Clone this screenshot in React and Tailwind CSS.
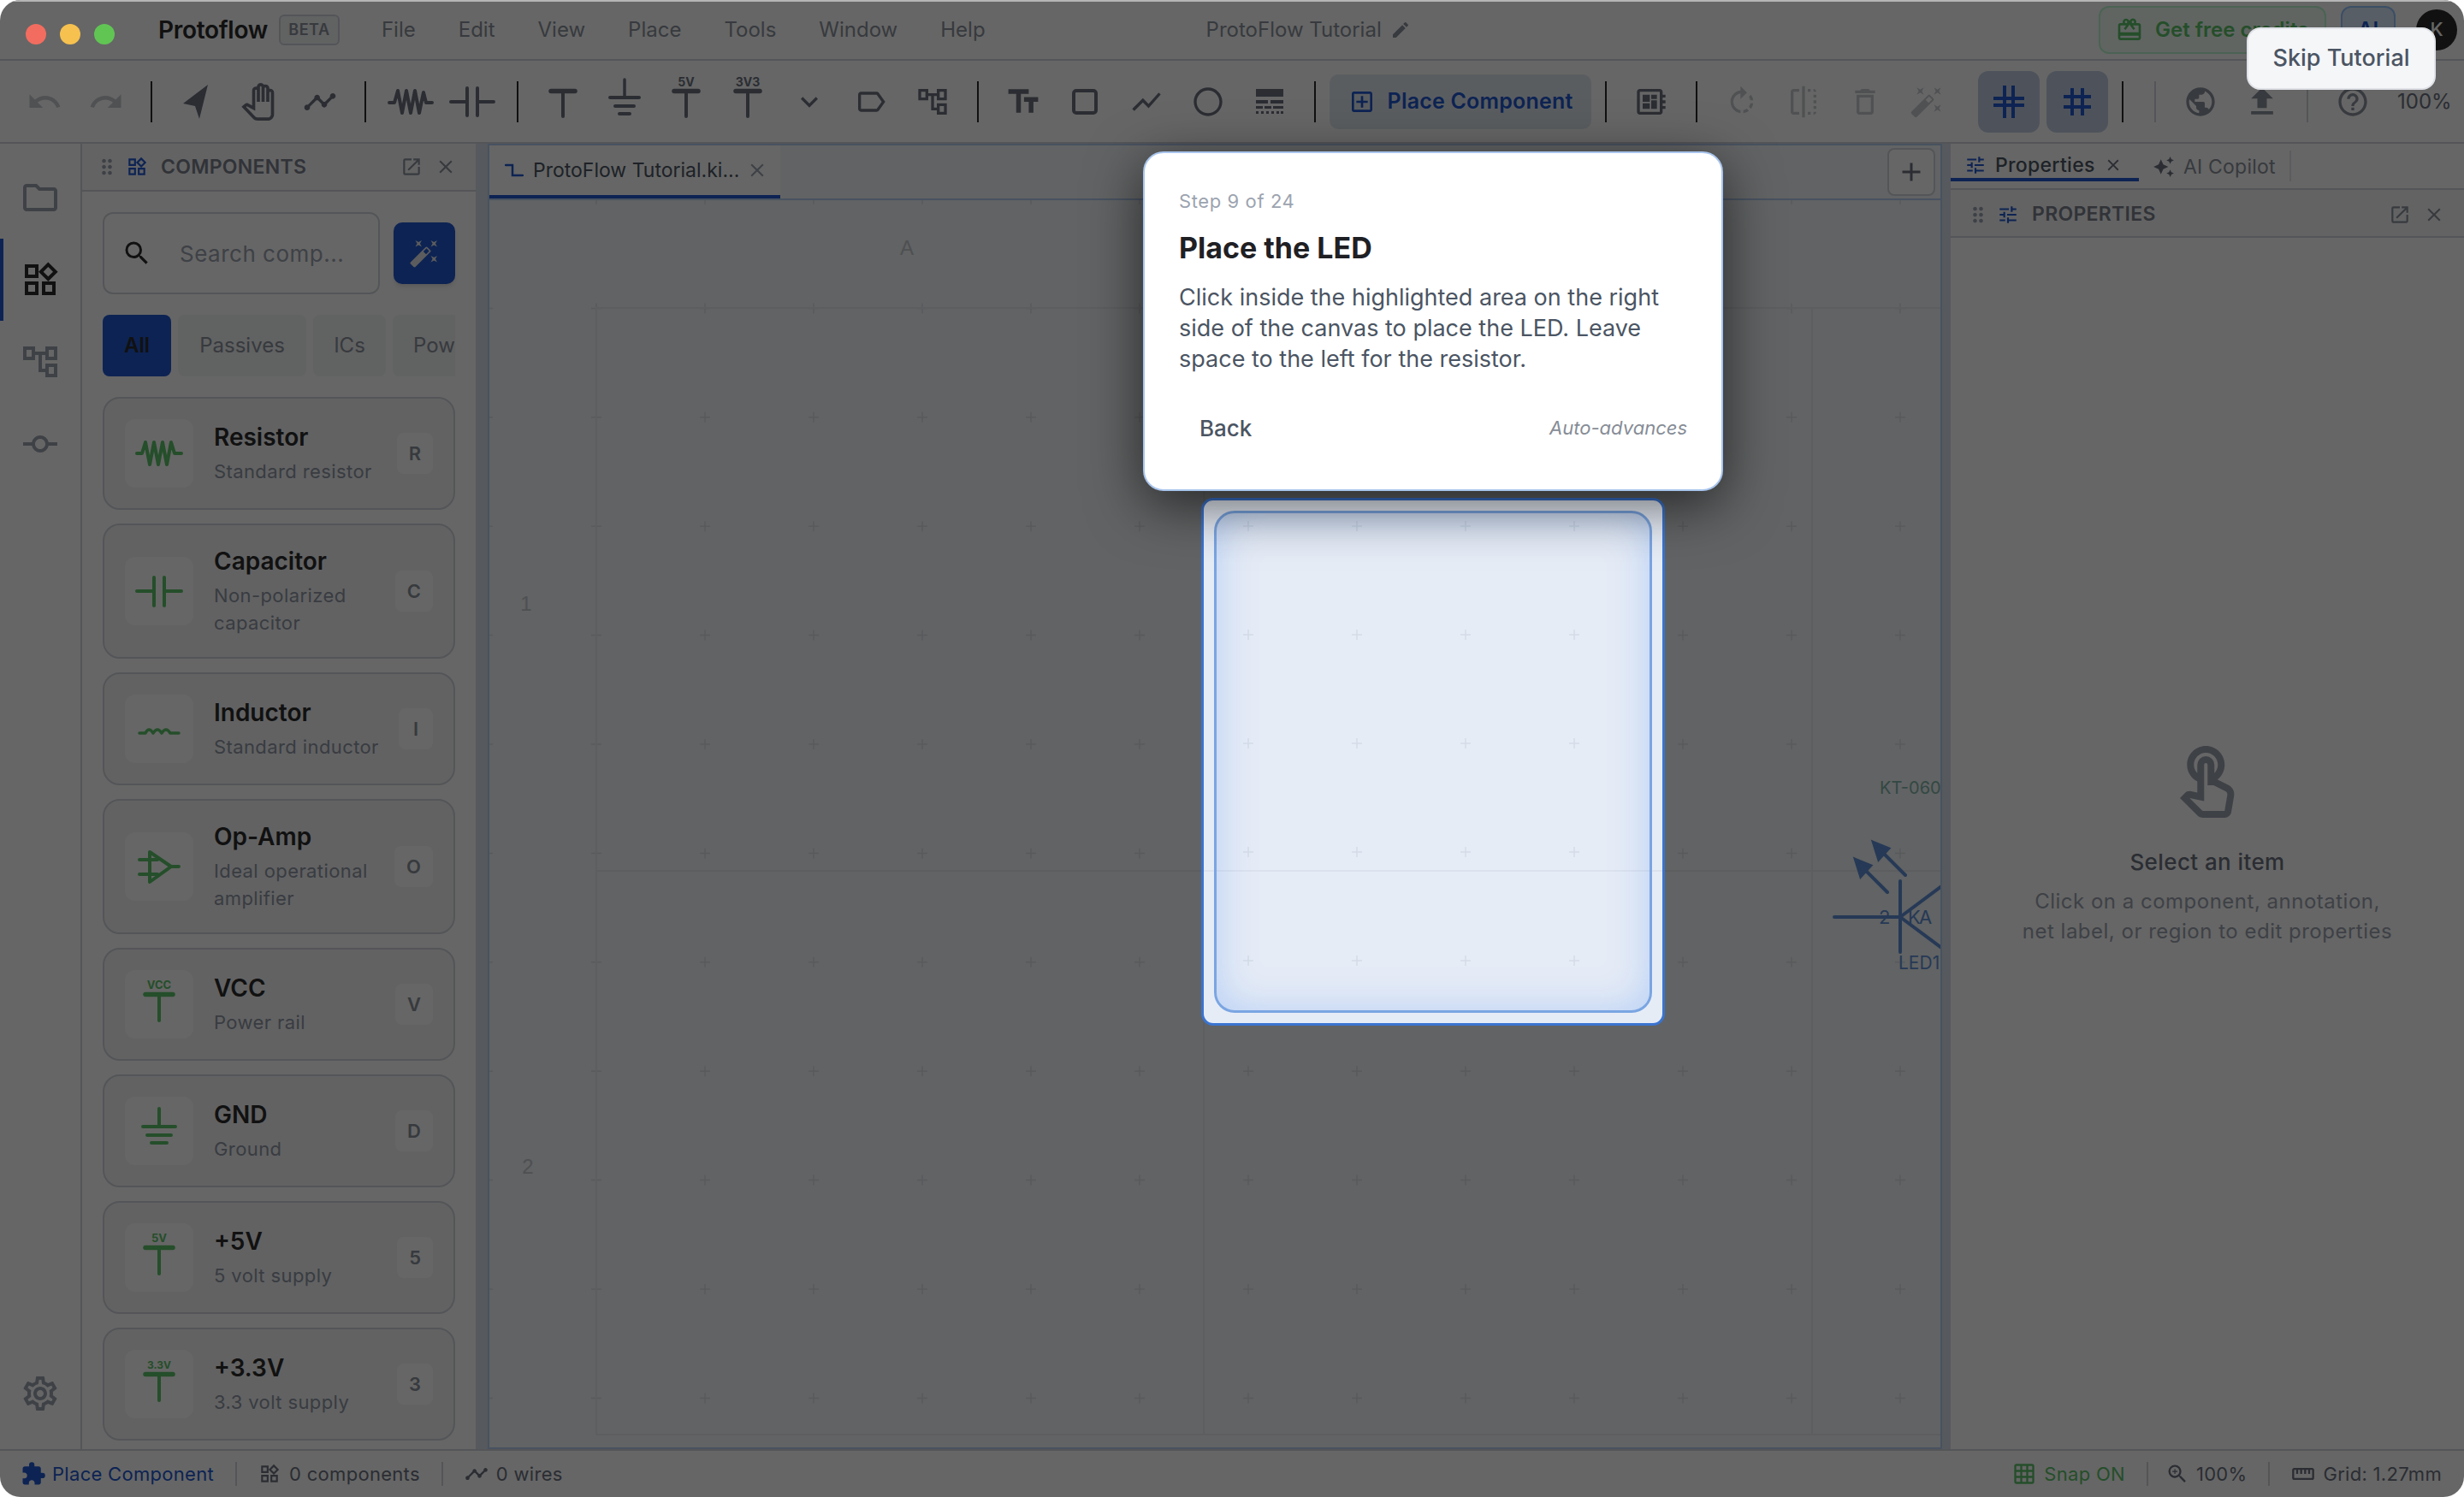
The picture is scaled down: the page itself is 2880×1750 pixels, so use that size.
import {
  MdUndo, MdRedo, MdOutlinePanTool, MdTimeline, MdExpandMore, MdOutlineLabel, MdOutlineAccountTree,
  MdTextFields, MdShowChart, MdOutlineCircle, MdOutlineAddBox, MdOutlineDeveloperBoard,
  MdRotateRight, MdFlip, MdOutlineDelete, MdAutoFixHigh, MdPublic, MdFileUpload, MdHelpOutline, MdEdit,
  MdOutlineRedeem, MdDragIndicator, MdOutlineWidgets, MdOpenInNew, MdClose, MdOutlineFolder, MdOutlineCommit,
  MdOutlineSettings, MdSearch, MdTune, MdAutoAwesome, MdAdd, MdOutlineTouchApp, MdExtension, MdGridOn,
  MdZoomIn, MdStraighten,
} from "react-icons/md"

const menus = ["File", "Edit", "View", "Place", "Tools", "Window", "Help"]

const GREEN = "#5cc46a"

function Power({ label, size = 48 }) {
  return (
    <svg className="overflow-visible" width={size} height={size} viewBox="0 0 48 48" fill="none" stroke="currentColor" strokeLinecap="round">
      {label && (
        <text x="24" y="6" textAnchor="middle" fontSize="14" fontWeight="700" fill="currentColor" stroke="none">
          {label}
        </text>
      )}
      <path d="M10 11.5H38" strokeWidth="5.5" />
      <path d="M24 12V41" strokeWidth="4" />
    </svg>
  )
}

function Gnd() {
  return (
    <svg className="overflow-visible" width="48" height="48" viewBox="0 0 48 48" fill="none" stroke="currentColor" strokeLinecap="round">
      <path d="M24 -2V18" strokeWidth="3.5" />
      <path d="M7 19H41" strokeWidth="4" />
      <path d="M13 29H35" strokeWidth="4" />
      <path d="M18 38H30" strokeWidth="4" />
    </svg>
  )
}

function Resistor() {
  return (
    <svg width="56" height="48" viewBox="0 0 56 48" fill="none" stroke="currentColor" strokeWidth="4" strokeLinecap="round" strokeLinejoin="round">
      <path d="M3 25H9L13 11L18 37L23 11L28 37L33 11L38 37L43 13L46 25H53" />
    </svg>
  )
}

function Cap() {
  return (
    <svg width="56" height="48" viewBox="0 0 56 48" fill="none" stroke="currentColor" strokeWidth="4" strokeLinecap="round">
      <path d="M3 24H22M22 8V40M34 8V40M34 24H53" />
    </svg>
  )
}

function Arrow() {
  return (
    <svg width="48" height="48" viewBox="0 0 48 48" fill="currentColor">
      <path d="M37 4L8 26L22 29L27 44Z" />
    </svg>
  )
}

function RectIcon() {
  return (
    <svg width="40" height="40" viewBox="0 0 40 40" fill="none" stroke="currentColor" strokeWidth="4">
      <rect x="7" y="7" width="26" height="26" rx="3" />
    </svg>
  )
}

function TableIcon() {
  return (
    <svg width="40" height="40" viewBox="0 0 40 40" fill="currentColor">
      <rect x="4" y="5" width="32" height="9" />
      <path d="M4 18h14v4H4zM21 18h15v4H21zM4 25h8v3H4zM14 25h8v3h-8zM24 25h12v3H24z" />
      <path d="M4 31h3v3H4zM10 31h3v3h-3zM16 31h3v3h-3zM22 31h3v3h-3zM28 31h3v3h-3zM33 31h3v3h-3z" />
    </svg>
  )
}

function Hash({ double }) {
  return (
    <svg width="44" height="44" viewBox="0 0 44 44" fill="none" stroke="#2158d0" strokeWidth="4">
      {double ? (
        <path d="M17 3V41M27 3V41M4 18H40M4 26H40" />
      ) : (
        <path d="M16 6V38M28 6V38M6 16H38M6 28H38" />
      )}
    </svg>
  )
}

function Sep() {
  return <div className="mx-[16px] h-[48px] w-[2px] shrink-0 bg-[#2b2b2b]" />
}

function Tool({ children, off, soft }) {
  const tone = off ? "text-[#c6cad0]" : soft ? "text-[#8b919c]" : "text-[#6b7280]"
  return <button className={`flex h-[72px] w-[72px] shrink-0 items-center justify-center ${tone}`}>{children}</button>
}

function TitleBar() {
  return (
    <div className="flex h-[71px] shrink-0 items-center border-b-[2px] border-[#d1d5db] bg-white pl-[30px]">
      <div className="relative z-10 flex w-[108px] gap-[16px] pt-[10px]">
        <span className="h-[24px] w-[24px] rounded-full bg-[#f26d5f]" />
        <span className="h-[24px] w-[24px] rounded-full bg-[#f6c14f]" />
        <span className="h-[24px] w-[24px] rounded-full bg-[#61c554]" />
      </div>
      <span className="ml-[47px] text-[28px] font-semibold tracking-[-0.3px] text-[#2b2b2b]">Protoflow</span>
      <span className="ml-[13px] flex h-[36px] w-[71px] items-center justify-center rounded-[6px] border-[2px] border-[#d1d5db] bg-[#f3f4f6] text-[18px] font-semibold tracking-[0.5px] text-[#8b919c]">
        BETA
      </span>
      <div className="ml-[49px] flex gap-[50px] text-[24px] text-[#8b919c]">
        {menus.map((m) => (
          <span key={m}>{m}</span>
        ))}
      </div>
      <div className="ml-[258px] flex items-center gap-[10px] text-[24px] text-[#8b919c]">
        <span>ProtoFlow Tutorial</span>
        <MdEdit size={24} />
      </div>
      <div className="ml-auto flex items-center pr-[8px]">
        <button className="flex h-[56px] w-[266px] items-center gap-[14px] rounded-[12px] border-[2px] border-[#bbf7d0] bg-[#f0fdf4] pl-[18px] text-[24px] font-semibold text-[#5cc46a]">
          <MdOutlineRedeem size={32} />
          Get free credits
        </button>
        <button className="ml-[17px] h-[56px] w-[64px] rounded-[12px] border-[2px] border-[#93c5fd] bg-[#dbeafe] text-[24px] font-semibold text-[#2158d0]">
          AI
        </button>
        <span className="ml-[24px] flex h-[48px] w-[48px] items-center justify-center rounded-full bg-[#2b2b2b] text-[22px] font-medium text-white">
          K
        </span>
      </div>
    </div>
  )
}

function Toolbar() {
  return (
    <div className="flex h-[97px] shrink-0 items-center border-b-[2px] border-[#d1d5db] bg-white pl-[16px]">
      <Tool off><MdUndo size={42} /></Tool>
      <Tool off><MdRedo size={42} /></Tool>
      <Sep />
      <Tool><Arrow /></Tool>
      <Tool><MdOutlinePanTool size={44} /></Tool>
      <Tool><MdTimeline size={40} /></Tool>
      <Sep />
      <Tool><Resistor /></Tool>
      <Tool><Cap /></Tool>
      <Sep />
      <Tool><Power /></Tool>
      <Tool><Gnd /></Tool>
      <Tool><Power label="5V" /></Tool>
      <Tool><Power label="3V3" /></Tool>
      <Tool><MdExpandMore size={40} /></Tool>
      <Tool><MdOutlineLabel size={40} /></Tool>
      <Tool><MdOutlineAccountTree size={40} /></Tool>
      <Sep />
      <Tool><MdTextFields size={44} /></Tool>
      <Tool><RectIcon /></Tool>
      <Tool><MdShowChart size={40} /></Tool>
      <Tool><MdOutlineCircle size={40} /></Tool>
      <Tool><TableIcon /></Tool>
      <Sep />
      <button className="flex h-[64px] w-[306px] shrink-0 items-center justify-center gap-[14px] rounded-[10px] bg-[#e2e8f0] text-[25px] font-semibold tracking-[0.2px] text-[#2158d0]">
        <MdOutlineAddBox size={32} />
        Place Component
      </button>
      <Sep />
      <Tool><MdOutlineDeveloperBoard size={40} /></Tool>
      <Sep />
      <Tool off><MdRotateRight size={40} /></Tool>
      <Tool off><MdFlip size={40} /></Tool>
      <Tool off><MdOutlineDelete size={40} /></Tool>
      <Tool off><MdAutoFixHigh size={40} /></Tool>
      <div className="ml-[24px] flex gap-[8px]">
        <button className="flex h-[72px] w-[72px] items-center justify-center rounded-[12px] bg-[#c2d0e4]"><Hash double /></button>
        <button className="flex h-[72px] w-[72px] items-center justify-center rounded-[12px] bg-[#c2d0e4]"><Hash /></button>
      </div>
      <Sep />
      <div className="flex items-center">
        <div className="ml-[20px] mr-[16px] h-[48px] w-[2px] bg-[#d1d5db]" />
        <Tool soft><MdPublic size={40} /></Tool>
        <Tool soft><MdFileUpload size={44} /></Tool>
        <div className="mx-[16px] h-[48px] w-[2px] bg-[#d1d5db]" />
        <Tool soft><MdHelpOutline size={40} /></Tool>
        <span className="ml-[16px] text-[24px] text-[#6b7280]">100%</span>
      </div>
    </div>
  )
}

function ActivityBar() {
  const Item = ({ children, active, cls }) => (
    <div className={`relative flex h-[96px] w-full items-center justify-center ${cls}`}>
      {active && <span className="absolute left-0 top-0 h-full w-[4px] bg-[#2158d0]" />}
      {children}
    </div>
  )
  return (
    <div className="flex w-[96px] shrink-0 flex-col items-center border-r-[2px] border-[#d1d5db] bg-white pt-[15px] text-[#9ca3af]">
      <Item><MdOutlineFolder size={48} /></Item>
      <Item active cls="text-[#2b2b2b]"><MdOutlineWidgets size={48} /></Item>
      <Item><MdOutlineAccountTree size={48} /></Item>
      <Item><MdOutlineCommit size={48} /></Item>
      <div className="mb-[41px] mt-auto"><MdOutlineSettings size={48} /></div>
    </div>
  )
}

function Box({ children }) {
  return (
    <svg width="80" height="80" viewBox="0 0 80 80" fill="none" stroke={GREEN} strokeWidth="4" strokeLinecap="round" strokeLinejoin="round">
      {children}
    </svg>
  )
}

function PowerBox({ label, small }) {
  return (
    <Box>
      <text x="40" y="22" textAnchor="middle" fontSize={small ? 12 : 13} fontWeight="700" fill={GREEN} stroke="none">{label}</text>
      <path d="M24 28.5H56" strokeWidth="5.5" />
      <path d="M40 29V59" />
    </Box>
  )
}

const parts = [
  {
    name: "Resistor", sub: ["Standard resistor"], key: "R",
    icon: <Box><path d="M14 40H20L24 27L29 53L34 27L39 53L44 27L49 53L54 27L58 40H66" /></Box>,
  },
  {
    name: "Capacitor", sub: ["Non-polarized", "capacitor"], key: "C",
    icon: <Box><path d="M14 40H34M34 24V57M46 24V57M46 40H66" /></Box>,
  },
  {
    name: "Inductor", sub: ["Standard inductor"], key: "I",
    icon: <Box><path d="M17 45H24Q28 37 33 45Q38 37 43 45Q48 37 53 45H63" strokeWidth="3.5" /></Box>,
  },
  {
    name: "Op-Amp", sub: ["Ideal operational", "amplifier"], key: "O",
    icon: <Box><path d="M29 23L54 40L29 58ZM54 40H63M17 32H38M17 49H38" /></Box>,
  },
  { name: "VCC", sub: ["Power rail"], key: "V", icon: <PowerBox label="VCC" /> },
  {
    name: "GND", sub: ["Ground"], key: "D",
    icon: <Box><path d="M40 14V35M21 35H59M26 45H54M31 54H49" /></Box>,
  },
  { name: "+5V", sub: ["5 volt supply"], key: "5", icon: <PowerBox label="5V" /> },
  { name: "+3.3V", sub: ["3.3 volt supply"], key: "3", icon: <PowerBox label="3.3V" small /> },
]

function PartCard({ part }) {
  return (
    <div className="flex shrink-0 items-center rounded-[20px] border-[2px] border-[#d1d5db] bg-[#f4f5f7] p-[24px]">
      <div className="flex h-[80px] w-[80px] shrink-0 items-center justify-center rounded-[12px] bg-white">{part.icon}</div>
      <div className="ml-[24px] flex-1">
        <div className="text-[28px] font-semibold leading-[36px] text-[#2b2b2b]">{part.name}</div>
        <div className="mt-[6px] text-[22px] leading-[32px] tracking-[0.4px] text-[#8f96a3]">
          {part.sub.map((s) => (
            <div key={s}>{s}</div>
          ))}
        </div>
      </div>
      <span className="flex h-[48px] min-w-[40px] shrink-0 items-center justify-center rounded-[8px] bg-white px-[14px] text-[22px] font-semibold text-[#8b919c]">
        {part.key}
      </span>
    </div>
  )
}

function PanelHeader({ icon, title, cls }) {
  return (
    <div className={`flex h-[56px] shrink-0 items-center border-b-[2px] border-[#d1d5db] bg-[#f7f8f9] pr-[22px] ${cls}`}>
      <MdDragIndicator size={28} className="text-[#9ca3af]" />
      <span className="ml-[8px] text-[#2158d0]">{icon}</span>
      <span className="ml-[15px] text-[23px] font-semibold tracking-[0.3px] text-[#7b818c]">{title}</span>
      <MdOpenInNew size={26} className="ml-auto text-[#8b919c]" />
      <MdClose size={26} className="ml-[14px] text-[#8b919c]" />
    </div>
  )
}

function ComponentsPanel() {
  return (
    <div className="flex w-[460px] shrink-0 flex-col overflow-hidden bg-white">
      <PanelHeader icon={<MdOutlineWidgets size={26} />} title="COMPONENTS" cls="pl-[15px]" />
      <div className="flex items-center gap-[16px] px-[24px] pt-[24px]">
        <div className="flex h-[96px] flex-1 items-center rounded-[12px] border-[2px] border-[#d1d5db] pl-[20px]">
          <MdSearch size={36} className="text-[#2b2b2b]" />
          <span className="ml-[32px] text-[26px] tracking-[0.5px] text-[#9ca3af]">Search comp...</span>
        </div>
        <button className="flex h-[72px] w-[72px] items-center justify-center rounded-[10px] bg-[#2158d0] text-[#e5e7eb] shadow-md">
          <MdAutoFixHigh size={36} />
        </button>
      </div>
      <div className="mx-[24px] mt-[24px] flex gap-[8px] overflow-hidden text-[24px] text-[#8b919c]">
        <span className="flex h-[72px] w-[80px] shrink-0 items-center justify-center rounded-[8px] bg-[#2158d0] font-semibold text-[#2b2b2b]">All</span>
        <span className="flex h-[72px] w-[150px] shrink-0 items-center justify-center rounded-[8px] bg-[#f3f4f6]">Passives</span>
        <span className="flex h-[72px] w-[85px] shrink-0 items-center justify-center rounded-[8px] bg-[#f3f4f6]">ICs</span>
        <span className="flex h-[72px] w-[110px] shrink-0 items-center rounded-[8px] bg-[#f3f4f6] pl-[24px]">Power</span>
      </div>
      <div className="flex flex-col gap-[16px] px-[24px] pt-[24px]">
        {parts.map((p) => (
          <PartCard key={p.name} part={p} />
        ))}
      </div>
    </div>
  )
}

const range = (start, count, step) => Array.from({ length: count }, (_, i) => start + i * step)

function Crosses({ xs, ys, color }) {
  return (
    <g stroke={color} strokeWidth="1.5">
      {xs.map((x) =>
        ys.map((y) => <path key={`${x}-${y}`} d={`M${x - 6} ${y}H${x + 6}M${x} ${y - 6}V${y + 6}`} />),
      )}
    </g>
  )
}

function Canvas() {
  const LED = "#5f8fd8"
  return (
    <div className="relative flex-1 overflow-hidden bg-[#f3f7fa]">
      <svg className="absolute left-0 top-0" width="1696" height="1458" viewBox="572 234 1696 1458" fill="none">
        <Crosses xs={range(570, 15, 127)} ys={range(233, 12, 127.4)} color="#dce0e6" />
        <path d="M697 1677V360H2268M697 1677H2268M1407 360V1677M2118 360V1677M697 1018H2268" stroke="#e8ebf0" strokeWidth="2" />
        <text x="1060" y="298" textAnchor="middle" fontSize="24" fontWeight="500" fill="#c4c8ce" stroke="none" fontFamily="Liberation Sans">A</text>
        <text x="615" y="714" textAnchor="middle" fontSize="24" fontWeight="500" fill="#c4c8ce" stroke="none" fontFamily="Liberation Sans">1</text>
        <text x="617" y="1372" textAnchor="middle" fontSize="24" fontWeight="500" fill="#c4c8ce" stroke="none" fontFamily="Liberation Sans">2</text>
        <text x="2197" y="928" fontSize="20" fill="#80b4a8" stroke="none">KT-060</text>
        <g stroke={LED} strokeWidth="4" strokeLinecap="round">
          <path d="M2144 1072H2221M2221 1030V1113M2221 1072L2272 1034M2221 1072L2272 1110" />
          <path d="M2206 1043L2175 1012M2227 1023L2196 992" />
          <path d="M2169 1005L2186 1012L2175 1024ZM2190 985L2207 992L2196 1004Z" fill={LED} />
        </g>
        <g fontSize="22" fill={LED} stroke="none">
          <text x="2196" y="1080">2</text>
          <text x="2230" y="1080">K</text>
          <text x="2243" y="1080">A</text>
          <text x="2219" y="1133" fontSize="21">LED1</text>
        </g>
      </svg>
    </div>
  )
}

function Editor() {
  return (
    <div className="flex min-w-0 flex-1 flex-col border-[2px] border-[#b4cdf0]">
      <div className="flex h-[64px] shrink-0 items-center border-b-[2px] border-[#b4cdf0] bg-[#f6f8fa] pr-[6px]">
        <div className="flex h-full w-[340px] items-center border-b-[4px] border-[#2158d0] bg-white pl-[18px]">
          <svg width="22" height="22" viewBox="0 0 22 22" fill="none" stroke="#2158d0" strokeWidth="2.5" strokeLinecap="round">
            <path d="M1 5H9V17H21" />
          </svg>
          <span className="ml-[11px] text-[23px] text-[#4b5563]">ProtoFlow Tutorial.ki...</span>
          <MdClose size={26} className="ml-[8px] text-[#9ca3af]" />
        </div>
        <button className="ml-auto flex h-[56px] w-[56px] items-center justify-center rounded-[8px] border-[2px] border-[#d1d5db] bg-white text-[#6b7280]">
          <MdAdd size={36} />
        </button>
      </div>
      <Canvas />
    </div>
  )
}

function PropertiesPanel() {
  return (
    <div className="flex w-[600px] shrink-0 flex-col bg-white">
      <div className="flex h-[54px] shrink-0 items-end border-b-[2px] border-[#d1d5db] pb-[8px]">
        <div className="flex h-[36px] w-[220px] items-center border-b-[4px] border-[#2158d0] pl-[16px] pt-[2px] text-[#2158d0]">
          <MdTune size={26} />
          <span className="ml-[10px] text-[23px] font-medium tracking-[0.3px] text-[#4b5563]">Properties</span>
          <MdClose size={22} className="ml-[10px] text-[#6b7280]" />
        </div>
        <div className="flex h-[36px] w-[178px] items-center border-r-[2px] border-[#e5e7eb] pl-[16px] pt-[2px] text-[#8b919c]">
          <MdAutoAwesome size={26} className="text-[#6b7280]" />
          <span className="ml-[10px] text-[23px] tracking-[0.2px]">AI Copilot</span>
        </div>
      </div>
      <PanelHeader icon={<MdTune size={26} />} title="PROPERTIES" cls="pl-[18px] pt-[3px]" />
      <div className="flex flex-1 flex-col items-center pt-[590px]">
        <MdOutlineTouchApp size={96} className="text-[#9ca3af]" />
        <div className="mt-[24px] text-[26px] font-medium tracking-[0.4px] text-[#6b7280]">Select an item</div>
        <div className="mt-[9px] text-center text-[24px] leading-[35px] tracking-[0.5px] text-[#9ca3af]">
          <div>Click on a component, annotation,</div>
          <div>net label, or region to edit properties</div>
        </div>
      </div>
    </div>
  )
}

function StatusBar() {
  const Bar = ({ cls = "mx-[25px]" }) => <span className={`h-[28px] w-[2px] bg-[#d1d5db] ${cls}`} />
  return (
    <div className="flex h-[56px] shrink-0 items-center border-t-[2px] border-[#d1d5db] bg-white pl-[24px] pr-[26px] text-[22px] tracking-[0.3px] text-[#6b7280]">
      <MdExtension size={30} className="text-[#2158d0]" />
      <span className="ml-[7px] text-[#2158d0]">Place Component</span>
      <Bar />
      <MdOutlineWidgets size={26} />
      <span className="ml-[10px]">0 components</span>
      <Bar />
      <MdTimeline size={28} />
      <span className="ml-[9px]">0 wires</span>
      <div className="ml-auto flex items-center">
        <MdGridOn size={28} className="text-[#5cc46a]" />
        <span className="ml-[9px] text-[#5cc46a]">Snap ON</span>
        <Bar cls="ml-[25px] mr-[20px]" />
        <MdZoomIn size={28} />
        <span className="ml-[8px]">100%</span>
        <Bar />
        <MdStraighten size={28} />
        <span className="ml-[9px]">Grid: 1.27mm</span>
      </div>
    </div>
  )
}

function Spotlight() {
  return (
    <div className="absolute left-[1404px] top-[582px] h-[617px] w-[542px] rounded-[14px] border-[3px] border-[#3a74d0] bg-[#e6ecf6] p-[12px]">
      <svg className="absolute left-0 top-0" width="536" height="611" viewBox="1407 585 536 611" fill="none">
        <path d="M1407 1018H1943" stroke="#dce2ed" strokeWidth="2" />
        <Crosses xs={range(1459, 4, 127)} ys={range(615, 5, 127)} color="#d5dce8" />
      </svg>
      <div className="relative h-full rounded-[24px] border-[3px] border-[#7aa5e2] shadow-[inset_0_0_48px_rgba(59,130,246,0.28)]" />
    </div>
  )
}

function TourCard() {
  return (
    <div className="absolute left-[1336px] top-[177px] h-[397px] w-[678px] rounded-[24px] border-[2px] border-[#a8c4ec] bg-white px-[40px] pt-[42px] shadow-[0_16px_64px_rgba(0,0,0,0.6)]">
      <div className="text-[22px] leading-[28px] tracking-[0.6px] text-[#9ca3af]">Step 9 of 24</div>
      <div className="mt-[19px] text-[34px] font-bold leading-[44px] text-[#1f2024]">Place the LED</div>
      <p className="mt-[18px] text-[27px] leading-[36px] text-[#4b5563]">
        Click inside the highlighted area on the right side of the canvas to place the LED. Leave space to the left for the resistor.
      </p>
      <div className="mt-[43px] flex items-center justify-between">
        <button className="pl-[24px] text-[26px] font-medium text-[#4b5563]">Back</button>
        <span className="text-[22px] italic text-[#868c96]">Auto-advances</span>
      </div>
    </div>
  )
}

export default function App() {
  return (
    <div className="h-[1750px] w-[2880px] overflow-hidden bg-white font-['Inter',sans-serif]">
      <div className="relative flex h-full flex-col overflow-hidden rounded-[24px]">
        <TitleBar />
        <Toolbar />
        <div className="flex min-h-0 flex-1">
          <ActivityBar />
          <ComponentsPanel />
          <div className="w-[14px] shrink-0 bg-[#d8dfe8]" />
          <Editor />
          <div className="w-[10px] shrink-0 bg-[#d8dfe8]" />
          <PropertiesPanel />
        </div>
        <StatusBar />
        <div className="absolute inset-0 bg-black/60" />
        <div className="absolute inset-x-0 top-0 h-[2px] bg-[#b5b5b5]" />
        <Spotlight />
        <TourCard />
        <button className="absolute left-[2626px] top-[32px] h-[73px] w-[221px] rounded-[16px] border-[2px] border-[#dfe2e7] bg-[#f5f6f8] text-[27px] font-medium text-[#4b5563]">
          Skip Tutorial
        </button>
      </div>
    </div>
  )
}
